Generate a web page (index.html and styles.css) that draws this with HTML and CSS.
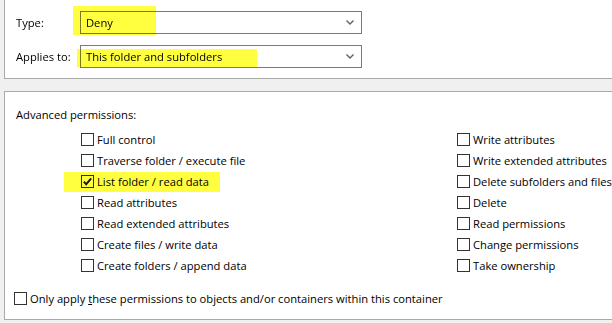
FILE: index.html
```html
<!DOCTYPE html>
<html lang="en">
<head>
    <meta charset="UTF-8">
    <meta name="viewport" content="width=device-width, initial-scale=1.0">
    <title>Permission Entry</title>
    <link rel="stylesheet" href="styles.css">
</head>
<body>
    <div class="panel entry">
        <div class="field">
            <span class="field-label">Type:</span>
            <div class="combo">
                <span>Deny</span>
                <svg class="chevron" width="8" height="5" viewBox="0 0 8 5"><polyline points="0.5,0.5 4,4 7.5,0.5" fill="none" stroke="#606060" stroke-width="1.4"/></svg>
            </div>
        </div>
        <div class="field">
            <span class="field-label">Applies to:</span>
            <div class="combo">
                <span>This folder and subfolders</span>
                <svg class="chevron" width="8" height="5" viewBox="0 0 8 5"><polyline points="0.5,0.5 4,4 7.5,0.5" fill="none" stroke="#606060" stroke-width="1.4"/></svg>
            </div>
        </div>
        <div class="mark mark-type"></div>
        <div class="mark mark-applies"></div>
    </div>

    <div class="panel perms">
        <div class="perms-title">Advanced permissions:</div>
        <div class="perm-grid">
            <div class="perm-col">
                <label class="check"><span class="box"></span>Full control</label>
                <label class="check"><span class="box"></span>Traverse folder / execute file</label>
                <label class="check"><span class="box checked"><svg width="11" height="11" viewBox="0 0 11 11"><polyline points="1.8,5.6 4.2,8.2 9.2,2.4" fill="none" stroke="#1a1a1a" stroke-width="1.9"/></svg></span>List folder / read data</label>
                <label class="check"><span class="box"></span>Read attributes</label>
                <label class="check"><span class="box"></span>Read extended attributes</label>
                <label class="check"><span class="box"></span>Create files / write data</label>
                <label class="check"><span class="box"></span>Create folders / append data</label>
            </div>
            <div class="perm-col">
                <label class="check"><span class="box"></span>Write attributes</label>
                <label class="check"><span class="box"></span>Write extended attributes</label>
                <label class="check"><span class="box"></span>Delete subfolders and files</label>
                <label class="check"><span class="box"></span>Delete</label>
                <label class="check"><span class="box"></span>Read permissions</label>
                <label class="check"><span class="box"></span>Change permissions</label>
                <label class="check"><span class="box"></span>Take ownership</label>
            </div>
        </div>
        <label class="check only-apply"><span class="box"></span><span>Only apply <u>t</u>hese permissions to objects and/or containers within this container</span></label>
        <div class="mark mark-list"></div>
    </div>
</body>
</html>
```

FILE: styles.css
```css
body {
    margin: 0;
    background-color: #f0f0f0;
    font-family: "Open Sans", "Noto Sans", sans-serif;
    font-size: 11.2px;
    color: #000;
    overflow: hidden;
    white-space: nowrap;
}
.panel {
    position: relative;
    margin-left: 4px;
    background: white;
    border-left: 1px solid #a9a9a9;
    border-bottom: 1px solid #a9a9a9;
}
.entry {
    height: 57px;
    padding: 11px 0 10px 11px;
    display: flex;
    flex-direction: column;
    gap: 11px;
}
.field {
    display: flex;
    align-items: center;
    height: 23px;
}
.field-label {
    width: 64px;
}
.combo {
    box-sizing: border-box;
    width: 282px;
    height: 23px;
    border: 1px solid #7a7a7a;
    padding: 0 0 0 5px;
    display: flex;
    align-items: center;
    justify-content: space-between;
}
.chevron {
    margin-right: 7px;
}
.perms {
    margin-top: 12px;
    border-top: 1px solid #a9a9a9;
    height: 212px;
    padding: 15px 0 0 9px;
}
.perms-title {
    height: 16px;
    line-height: 16px;
    padding-left: 2px;
    margin-bottom: 6px;
}
.perm-grid {
    display: grid;
    grid-template-columns: 376px auto;
    margin-left: 67px;
}
.check {
    display: flex;
    align-items: center;
    height: 21px;
    gap: 3px;
}
.box {
    box-sizing: border-box;
    width: 13px;
    height: 13px;
    border: 1px solid #333;
    background: white;
    display: flex;
    align-items: center;
    justify-content: center;
}
.only-apply {
    margin-top: 12px;
}
.only-apply u {
    text-decoration-thickness: 1px;
}
.mark {
    position: absolute;
    background: #ffff40;
    mix-blend-mode: multiply;
}
.mark-type {
    left: 68px;
    top: 6px;
    width: 83px;
    height: 29px;
}
.mark-applies {
    left: 72px;
    top: 49px;
    width: 180px;
    height: 18px;
}
.mark-list {
    left: 59px;
    top: 80px;
    width: 156px;
    height: 20px;
}
```
